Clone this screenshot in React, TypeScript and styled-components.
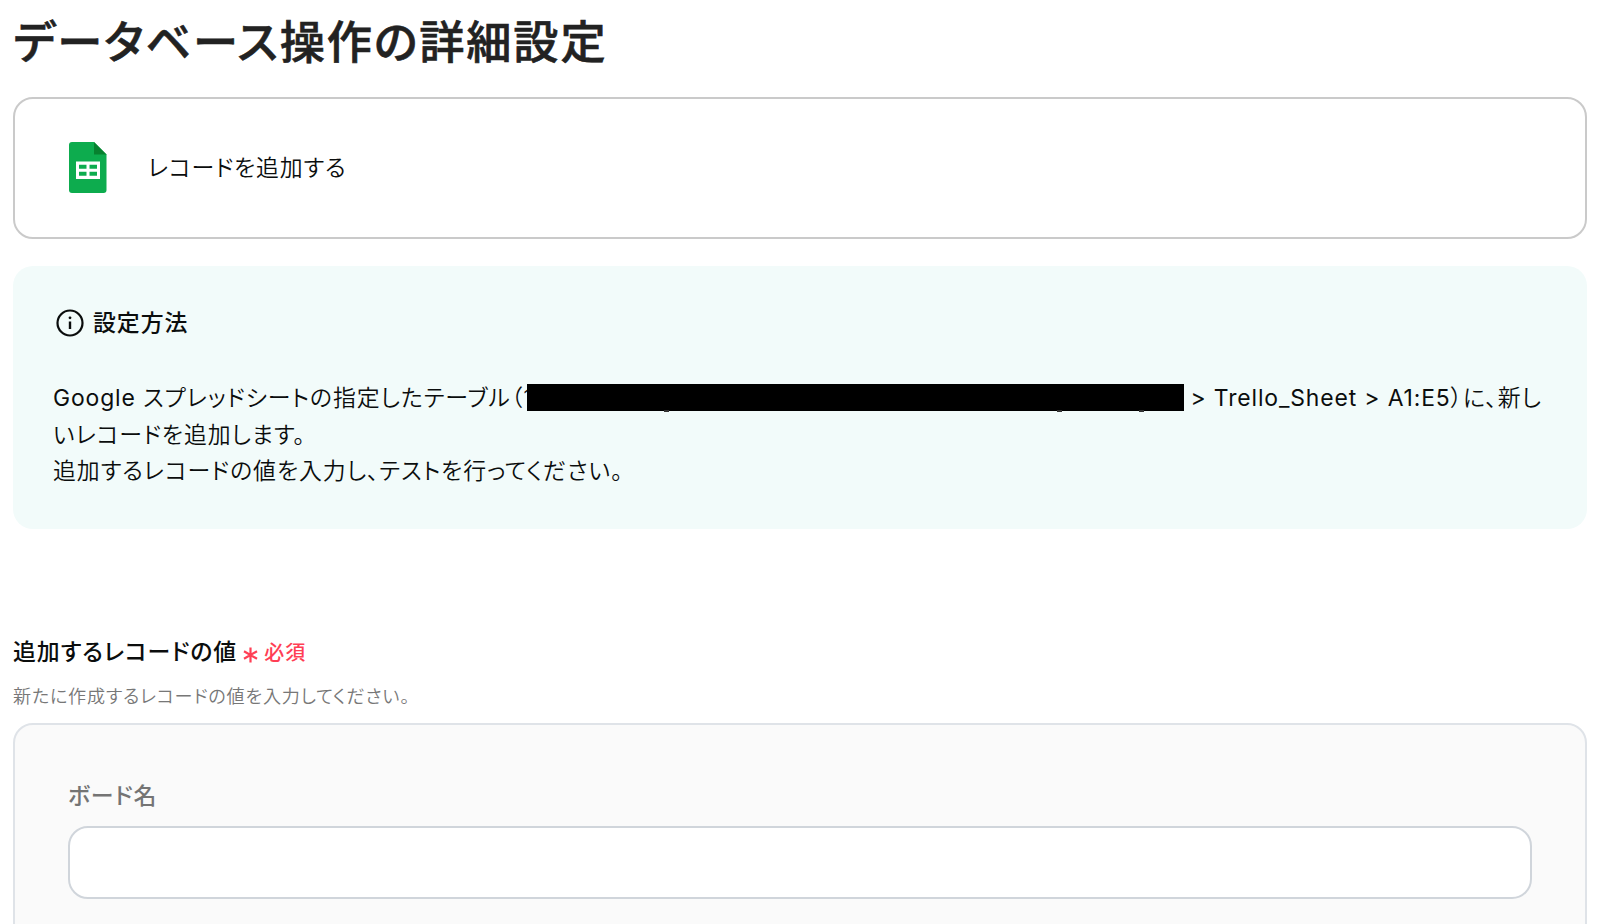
import styled, { createGlobalStyle } from "styled-components";

const GlobalStyle = createGlobalStyle`
  *, *::before, *::after {
    box-sizing: border-box;
  }

  body {
    margin: 0;
    background: #fff;
    color: #0b0d0d;
    font-family: Inter, "Noto Sans CJK JP", sans-serif;
    font-feature-settings: "palt";
    overflow: hidden;
  }
`;

const Page = styled.main`
  display: flex;
  flex-direction: column;
  height: 924px;
  padding: 0 13px;
  overflow: hidden;
`;

const Title = styled.h1`
  margin: 8px 0 19px 0.5px;
  color: #222;
  font-size: 45.2px;
  font-weight: 500;
  letter-spacing: 0.041em;
  line-height: 70px;
  -webkit-text-stroke: 0.6px #222;
`;

const ActionCard = styled.section`
  display: flex;
  flex: none;
  align-items: center;
  gap: 41px;
  height: 142px;
  padding: 0 54px;
  border: 2px solid #cacaca;
  border-radius: 20px;

  svg {
    margin-bottom: 1px;
  }
`;

const ActionName = styled.span`
  padding-bottom: 4px;
  font-size: 22.9px;
  font-weight: 350;
  letter-spacing: 0.038em;
`;

const InfoBox = styled.section`
  flex: none;
  height: 263px;
  margin-top: 27px;
  padding: 40px 40px 0;
  border-radius: 20px;
  background: #f2fbfa;
`;

const InfoHeading = styled.h2`
  display: flex;
  align-items: center;
  gap: 9px;
  margin: 0 0 40px 3px;
  font-size: 22.9px;
  font-weight: 500;
  letter-spacing: 0.041em;
  line-height: 34px;
`;

const InfoText = styled.p`
  margin: 0;
  font-size: 22.9px;
  font-weight: 350;
  letter-spacing: 0.041em;
  line-height: 36.5px;
`;

const Latin = styled.span`
  font-weight: 400;
  letter-spacing: 0.038em;
`;

const Redacted = styled.span`
  position: relative;
  display: inline-block;
  width: 657px;
  height: 27px;
  margin: 0 -1px 0 -6px;
  background: #000;
  vertical-align: -5px;

  /* descenders that stick out under the bar */
  &::after {
    content: "";
    position: absolute;
    top: 26px;
    left: 137px;
    width: 5px;
    height: 2px;
    background: #333;
    box-shadow: 393px 0 #333, 475px 0 #333;
  }
`;

const FieldLabel = styled.div`
  display: flex;
  align-items: center;
  gap: 6px;
  height: 34px;
  margin-top: 106px;
  font-size: 22.9px;
  font-weight: 500;
  letter-spacing: 0.042em;
  line-height: 34px;
`;

const Required = styled.span`
  display: flex;
  align-items: center;
  gap: 6px;
  padding-top: 2px;
  color: #ff3f55;
  font-size: 20px;

  svg {
    margin-top: 4px;
  }
`;

const HelpText = styled.p`
  margin: 14px 0 14px;
  color: #777;
  font-size: 18.1px;
  font-weight: 350;
  letter-spacing: 0.043em;
  line-height: 26px;
`;

const RecordPanel = styled.section`
  flex: none;
  height: 240px;
  padding: 54px 53px 0;
  border: 2px solid #dfe3e8;
  border-radius: 20px;
  background: #fafafa;
`;

const InputLabel = styled.label`
  display: block;
  margin-bottom: 13px;
  color: #747474;
  font-size: 22.9px;
  font-weight: 500;
  letter-spacing: 0.041em;
  line-height: 34px;
`;

const TextInput = styled.input`
  display: block;
  width: 100%;
  height: 73px;
  padding: 0 20px;
  border: 2px solid #d0d5db;
  border-radius: 20px;
  background: #fff;
  font: inherit;
  outline: none;
`;

function SheetsIcon() {
  return (
    <svg width="38" height="51" viewBox="0 0 38 51">
      <path d="M3 0h22l12.500 12.500V48a3 3 0 0 1-3 3H3a3 3 0 0 1-3-3V3a3 3 0 0 1 3-3z" fill="#0dac4e" />
      <path d="M25 0l12.500 12.500H25z" fill="#07812f" />
      <path
        d="M7 19.500h24V37H7zM10 22.700v4h7.500v-4zM20.500 22.700v4H28v-4zM10 29.700v4h7.500v-4zM20.500 29.700v4H28v-4z"
        fill="#fff"
        fillRule="evenodd"
      />
    </svg>
  );
}

function InfoIcon() {
  return (
    <svg width="28" height="28" viewBox="0 0 28 28">
      <circle cx="14" cy="14" r="12.500" fill="none" stroke="#0b0d0d" strokeWidth="2.200" />
      <circle cx="14" cy="8.800" r="1.400" fill="#0b0d0d" />
      <path d="M14 12.500v7.500" stroke="#0b0d0d" strokeWidth="2.400" />
    </svg>
  );
}

function AsteriskIcon() {
  return (
    <svg width="15" height="16" viewBox="0 0 15 16">
      <path d="M7.500 .5v15M1 4.200l13 7.600M14 4.200L1 11.800" stroke="#ff3f55" strokeWidth="2.200" />
    </svg>
  );
}

export default function App() {
  return (
    <>
      <GlobalStyle />
      <Page lang="ja">
        <Title>データベース操作の詳細設定</Title>
        <ActionCard>
          <SheetsIcon />
          <ActionName>レコードを追加する</ActionName>
        </ActionCard>
        <InfoBox>
          <InfoHeading>
            <InfoIcon />
            設定方法
          </InfoHeading>
          <InfoText>
            <Latin>Google</Latin> スプレッドシートの指定したテーブル（1
            <Redacted /> <Latin>&gt; Trello_Sheet &gt; A1:E5</Latin>）に、新しいレコードを追加します。
            <br />
            追加するレコードの値を入力し、テストを行ってください。
          </InfoText>
        </InfoBox>
        <FieldLabel>
          追加するレコードの値
          <Required>
            <AsteriskIcon />
            必須
          </Required>
        </FieldLabel>
        <HelpText>新たに作成するレコードの値を入力してください。</HelpText>
        <RecordPanel>
          <InputLabel htmlFor="board-name">ボード名</InputLabel>
          <TextInput id="board-name" type="text" />
        </RecordPanel>
      </Page>
    </>
  );
}
